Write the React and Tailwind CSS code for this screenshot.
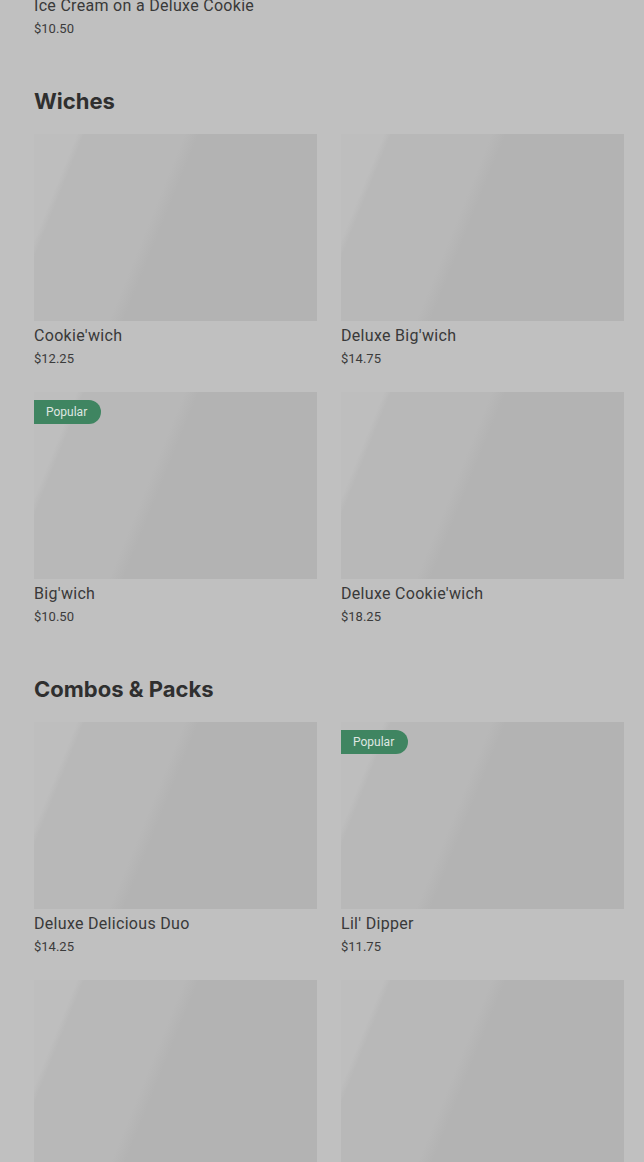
import React from "react";

const sections = [
  {
    title: "Wiches",
    items: [
      { name: "Cookie'wich", price: "$12.25" },
      { name: "Deluxe Big'wich", price: "$14.75" },
      { name: "Big'wich", price: "$10.50", popular: true },
      { name: "Deluxe Cookie'wich", price: "$18.25" },
    ],
  },
  {
    title: "Combos & Packs",
    items: [
      { name: "Deluxe Delicious Duo", price: "$14.25" },
      { name: "Lil' Dipper", price: "$11.75", popular: true },
      {},
      {},
    ],
  },
];

const ItemCard = ({ item }) => (
  <div>
    <div className="relative h-[187px] w-full bg-[linear-gradient(112deg,#bebebe_0%,#bebebe_12%,#b8b8b8_14%,#b8b8b8_42%,#b3b3b3_46%,#b3b3b3_100%)]">
      {item.popular && (
        <span className="absolute left-0 top-2 h-6 pl-3 pr-[14px] rounded-r-full bg-[#3f8561] text-[#dfe7e2] text-[12px] leading-6 font-['Roboto',sans-serif]">
          Popular
        </span>
      )}
    </div>
    {item.name && (
      <>
        <p className="mt-[4px] text-[16px] leading-[22px] tracking-[0.3px] text-[#393939] font-['Roboto',sans-serif]">{item.name}</p>
        <p className="mt-[2px] text-[13px] leading-[20px] text-[#3b3b3b] font-['Roboto',sans-serif]">{item.price}</p>
      </>
    )}
  </div>
);

export default function App() {
  return (
    <div className="h-[1162px] w-[644px] overflow-hidden bg-[#c0c0c0] pl-[34px] pr-[20px]">
      <div className="-mt-[5px]">
        <p className="text-[16px] leading-[22px] tracking-[0.3px] text-[#393939] font-['Roboto',sans-serif]">Ice Cream on a Deluxe Cookie</p>
        <p className="mt-[2px] text-[13px] leading-[20px] text-[#3b3b3b] font-['Roboto',sans-serif]">$10.50</p>
      </div>
      {sections.map((section) => (
        <section key={section.title} className="mt-[48px]">
          <h2 className="text-[22px] leading-[28px] font-bold text-[#2f2f2f] font-['Inter',sans-serif]">
            {section.title}
          </h2>
          <div className="mt-[19px] grid grid-cols-2 gap-x-6 gap-y-[23px]">
            {section.items.map((item, i) => (
              <ItemCard key={i} item={item} />
            ))}
          </div>
        </section>
      ))}
    </div>
  );
}
